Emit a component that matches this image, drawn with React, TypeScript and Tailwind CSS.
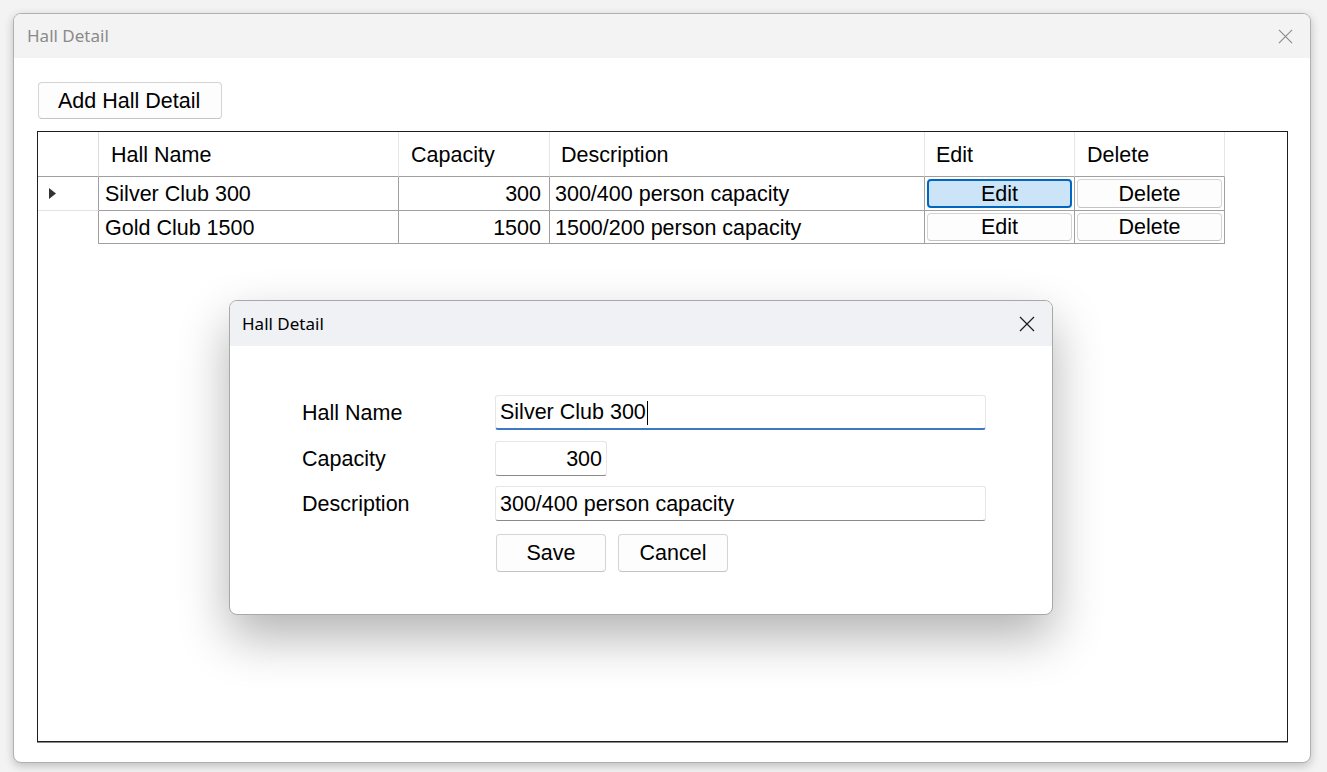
import React from "react";

const F = { fontFamily: '"Liberation Sans", Arial, sans-serif' };
const T = { fontFamily: '"Noto Sans", "Open Sans", sans-serif' };

function XIcon({ color, size }: { color: string; size: number }) {
  return (
    <svg width={size} height={size} viewBox="0 0 16 16" fill="none">
      <path d="M1 1 L15 15 M15 1 L1 15" stroke={color} strokeWidth="1.2" />
    </svg>
  );
}

function Btn({
  children,
  selected,
  className,
}: {
  children: React.ReactNode;
  selected?: boolean;
  className?: string;
}) {
  return (
    <div
      className={
        (selected
          ? "bg-[#cce4f7] border-2 border-[#0067c0] "
          : "bg-[#fdfdfd] border border-[#d4d4d4] border-b-[#c4c4c4] ") +
        "rounded-[4px] flex items-center justify-center text-[21.5px] text-black leading-none pt-[2px] " +
        (className || "")
      }
    >
      {children}
    </div>
  );
}

const rows = [
  { name: "Silver Club 300", cap: "300", desc: "300/400 person capacity", sel: true },
  { name: "Gold Club 1500", cap: "1500", desc: "1500/200 person capacity", sel: false },
];

export default function App() {
  return (
    <div
      className="w-[1327px] h-[772px] bg-[#f3f3f3] relative overflow-hidden pl-[13px] pt-[13px]"
      style={F}
    >
      {/* Main window */}
      <div className="w-[1298px] h-[750px] rounded-[8px] border border-[#b0b0b0] bg-white shadow-[0_3px_10px_rgba(0,0,0,0.22)] flex flex-col overflow-hidden">
        <div className="h-[44px] bg-[#f3f3f3] flex items-center justify-between pl-[13px] pr-[17px] shrink-0">
          <span className="text-[17px] text-[#8a8a8a]" style={T}>
            Hall Detail
          </span>
          <XIcon color="#8a8a8a" size={15} />
        </div>
        <div className="flex-1 flex flex-col pl-[23px] pr-[22px] pt-[24px] pb-[20px]">
          <Btn className="ml-[1px] w-[184px] h-[37px] !justify-start pl-[19px]">Add Hall Detail</Btn>
          <div className="mt-[12px] flex-1 border border-[#1e1e1e] shadow-[0_1px_0_#8a8a8a] bg-white text-[21.5px] text-black leading-none">
            {/* header row */}
            <div className="flex h-[45px]">
              <div className="w-[61px] border-r border-r-[#dcdcdc] border-b border-b-[#a0a0a0]" />
              {[
                ["Hall Name", "w-[300px]", "pl-[12px]"],
                ["Capacity", "w-[151px]", "pl-[12px]"],
                ["Description", "w-[375px]", "pl-[11px]"],
                ["Edit", "w-[150px]", "pl-[11px]"],
                ["Delete", "w-[150px]", "pl-[12px]"],
              ].map(([t, w, p]) => (
                <div
                  key={t}
                  className={w + " " + p + " pt-[3px] border-r border-r-[#e6e6e6] border-b border-b-[#a0a0a0] flex items-center"}
                >
                  {t}
                </div>
              ))}
            </div>
            {rows.map((r, i) => (
              <div key={r.name} className={"flex " + (i === 0 ? "h-[34px]" : "h-[33px]")}>
                <div
                  className={
                    "w-[61px] border-r border-r-[#a0a0a0] flex items-center pl-[11px] " +
                    (i === 0 ? "border-b border-b-[#e3e3e3]" : "")
                  }
                >
                  {r.sel && (
                    <svg width="7" height="11" viewBox="0 0 7 11">
                      <polygon points="0,0 7,5.5 0,11" fill="#333" />
                    </svg>
                  )}
                </div>
                <div className="w-[300px] border-r border-b border-[#a0a0a0] flex items-center pl-[6px] pt-[3px]">
                  {r.name}
                </div>
                <div className="w-[151px] border-r border-b border-[#a0a0a0] flex items-center justify-end pr-[8px] pt-[3px]">
                  {r.cap}
                </div>
                <div className="w-[375px] border-r border-b border-[#a0a0a0] flex items-center pl-[5px] pt-[3px]">
                  {r.desc}
                </div>
                <div className="w-[150px] border-r border-b border-[#a0a0a0] p-[2px] flex">
                  <Btn selected={r.sel} className="flex-1">
                    Edit
                  </Btn>
                </div>
                <div className="w-[150px] border-r border-b border-[#a0a0a0] p-[2px] flex">
                  <Btn className="flex-1">Delete</Btn>
                </div>
              </div>
            ))}
          </div>
        </div>
      </div>

      {/* Dialog */}
      <div className="absolute left-[229px] top-[300px] w-[824px] h-[315px] rounded-[8px] border border-[#a8a8a8] bg-white shadow-[0_22px_50px_rgba(0,0,0,0.3)] flex flex-col overflow-hidden">
        <div className="h-[45px] bg-[#eff1f4] flex items-center justify-between pl-[12px] pr-[17px] shrink-0">
          <span className="text-[17px] text-black" style={T}>
            Hall Detail
          </span>
          <XIcon color="#1a1a1a" size={16} />
        </div>
        <div className="flex-1 pl-[72px] pt-[49px] flex flex-col text-[21.5px] text-black leading-none">
          <div className="flex items-center h-[35px]">
            <div className="w-[193px] pt-[3px]">Hall Name</div>
            <div className="w-[491px] h-[35px] rounded-[3px] border border-[#e6e6e6] border-b-2 border-b-[#3d78c2] flex items-center pl-[4px] pt-[2px]">
              <span>Silver Club 300</span>
              <span className="w-[1px] h-[24px] bg-black ml-[1px]" />
            </div>
          </div>
          <div className="flex items-center h-[35px] mt-[11px]">
            <div className="w-[193px] pt-[3px]">Capacity</div>
            <div className="w-[112px] h-[35px] rounded-[3px] border border-[#e6e6e6] border-b-[#8a8a8a] flex items-center justify-end pr-[4px] pt-[3px]">
              300
            </div>
          </div>
          <div className="flex items-center h-[35px] mt-[10px]">
            <div className="w-[193px] pt-[3px]">Description</div>
            <div className="w-[491px] h-[35px] rounded-[3px] border border-[#e6e6e6] border-b-[#8a8a8a] flex items-center pl-[4px] pt-[3px]">
              300/400 person capacity
            </div>
          </div>
          <div className="flex ml-[194px] mt-[13px] gap-[12px]">
            <Btn className="w-[110px] h-[38px]">Save</Btn>
            <Btn className="w-[110px] h-[38px]">Cancel</Btn>
          </div>
        </div>
      </div>
    </div>
  );
}
